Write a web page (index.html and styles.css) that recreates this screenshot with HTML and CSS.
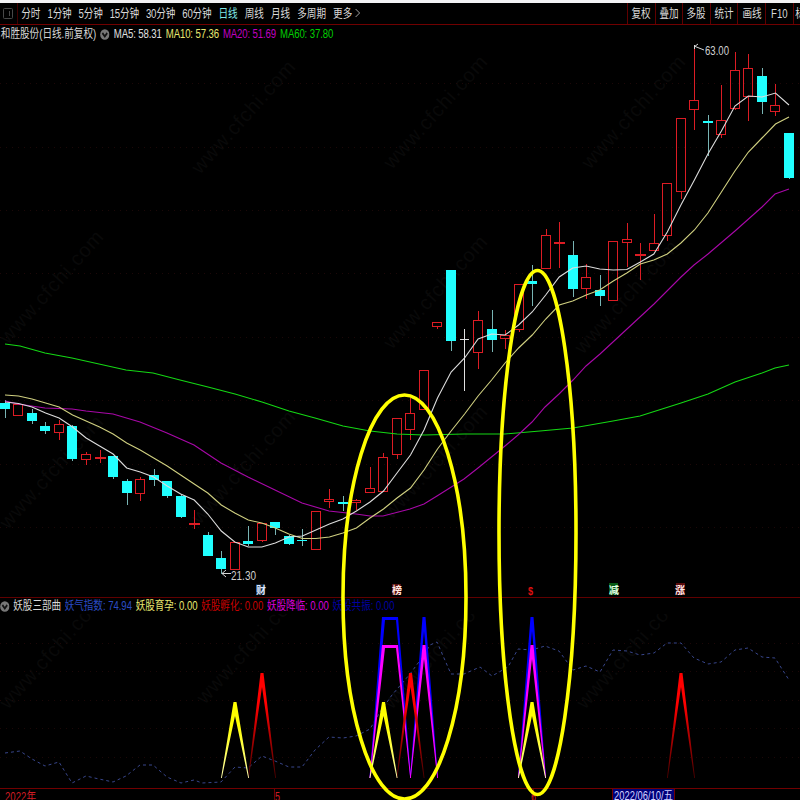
FILE: index.html
```
<!DOCTYPE html>
<html lang="zh-CN">
<head>
    <meta charset="UTF-8">
    <meta name="viewport" content="width=device-width, initial-scale=1.0">
    <title>和胜股份 日线</title>
    <link rel="stylesheet" href="styles.css">
</head>
<body>
    <div class="terminal">
        <div class="toolbar">
            <div class="panel-toggle">
                <svg width="10" height="12" viewBox="0 0 10 12"><rect x="0.5" y="0.5" width="9" height="10" rx="1"/><path d="M6.5 3v5"/></svg>
            </div>
            <div class="periods">
                <span>分时</span><span class="minutes">1分钟</span><span class="minutes">5分钟</span><span class="minutes">15分钟</span><span class="minutes">30分钟</span><span class="minutes">60分钟</span><span class="active">日线</span><span>周线</span><span>月线</span><span>多周期</span><span>更多<svg class="arrow" width="7" height="10" viewBox="0 0 7 10"><path d="M1 1l5 4-5 4"/></svg></span>
            </div>
            <div class="tools">
                <div><span>复权</span></div>
                <div><span>叠加</span></div>
                <div><span>多股</span></div>
                <div><span>统计</span></div>
                <div><span>画线</span></div>
                <div><span>F10</span></div>
                <div class="cut"><span>标</span></div>
            </div>
        </div>

        <div class="legend main-legend">
            <div class="squeeze">
                <span class="stock">和胜股份(日线.前复权)</span>
                <svg class="round" width="12" height="11" viewBox="0 0 12 11"><ellipse cx="6" cy="5.5" rx="5.8" ry="5.3"/><path d="M3 4l3 3.5L9 4"/></svg>
                <span class="white">MA5: 58.31</span>
                <span class="yellow">MA10: 57.36</span>
                <span class="magenta">MA20: 51.69</span>
                <span class="green">MA60: 37.80</span>
            </div>
        </div>

        <svg class="main-chart" id="mainChart" viewBox="0 43 800 554">
            <g id="mainMarks"></g>
            <g id="mainGrid" class="grid"></g>
            <g id="candles"></g>
            <g id="averages"></g>
            <!-- high / low markers -->
            <path class="pointer" d="M694 47l4-3M694.5 45v4M694 46l10 4"/>
            <text class="price" x="705" y="55" textLength="24" lengthAdjust="spacingAndGlyphs">63.00</text>
            <path class="pointer" d="M222 573.5h9M226 570l-4 3.5 4 3.5"/>
            <text class="price" x="231" y="580" textLength="25" lengthAdjust="spacingAndGlyphs">21.30</text>
            <!-- event tags -->
            <g class="tags">
                <rect x="256" y="584" width="9" height="11" fill="#123"/>
                <text x="256" y="594" fill="#dde6ff">财</text>
                <rect x="392" y="584" width="9" height="11" fill="#5a1010"/>
                <text x="392" y="594" fill="#ffe8e0">榜</text>
                <text x="528" y="595" class="dollar" fill="#e01010" textLength="5" lengthAdjust="spacingAndGlyphs">$</text>
                <rect x="609" y="583" width="9" height="12" fill="#075a14"/>
                <text x="609" y="594" fill="#e4ffe4">减</text>
                <rect x="676" y="583" width="9" height="12" fill="#5a0c0c"/>
                <text x="675" y="594" fill="#ffe8e8">涨</text>
            </g>
        </svg>

        <div class="legend sub-legend">
            <div class="squeeze">
                <svg class="round" width="12" height="11" viewBox="0 0 12 11"><ellipse cx="6" cy="5.5" rx="5.8" ry="5.3"/><path d="M3 4l3 3.5L9 4"/></svg>
                <span class="name">妖股三部曲</span>
                <span class="index">妖气指数: 74.94</span>
                <span class="yellow">妖股育孕: 0.00</span>
                <span class="red">妖股孵化: 0.00</span>
                <span class="magenta-bright">妖股降临: 0.00</span>
                <span class="blue">妖股共振: 0.00</span>
            </div>
        </div>

        <svg class="sub-chart" id="subChart" viewBox="0 614 800 174">
            <defs>
                <linearGradient id="fadeRed" gradientUnits="userSpaceOnUse" x1="0" y1="673" x2="0" y2="775">
                    <stop offset="0.3" stop-color="#ff0000"/>
                    <stop offset="1" stop-color="#500000"/>
                </linearGradient>
                <linearGradient id="fadeYellow" gradientUnits="userSpaceOnUse" x1="0" y1="702" x2="0" y2="778">
                    <stop offset="0.3" stop-color="#ffff00"/>
                    <stop offset="1" stop-color="#ffffb0"/>
                </linearGradient>
            </defs>
            <g id="subMarks"></g>
            <g id="subGrid" class="grid"></g>
            <g id="signals"></g>
        </svg>

        <svg class="axis" viewBox="0 788 800 12">
            <path class="axis-line" d="M0 788.5h800M274.5 788v12M533.5 788v12M612.5 788v12M674.5 788v12"/>
            <text class="axis-text" x="5" y="801" textLength="31" lengthAdjust="spacingAndGlyphs">2022年</text>
            <text class="axis-text" x="275" y="801" textLength="5" lengthAdjust="spacingAndGlyphs">5</text>
            <text class="axis-text" x="531" y="801" textLength="5" lengthAdjust="spacingAndGlyphs">6</text>
            <rect x="613" y="789" width="61" height="11" fill="#000078"/>
            <text class="axis-date" x="614" y="800" textLength="59" lengthAdjust="spacingAndGlyphs">2022/06/10/五</text>
        </svg>

        <svg class="highlights" viewBox="0 0 800 800">
            <ellipse cx="404.5" cy="597" rx="61.5" ry="202"/>
            <ellipse cx="537.5" cy="532.5" rx="38.5" ry="262"/>
        </svg>
    </div>
    <script src="chart.js"></script>
</body>
</html>
```
FILE: styles.css
```
* {
    margin: 0;
    padding: 0;
    box-sizing: border-box;
}

body {
    background: #000;
    width: 800px;
    height: 800px;
    overflow: hidden;
    font-family: "Liberation Sans", "Noto Sans CJK SC", sans-serif;
    font-size: 12px;
    color: #d8d8d8;
}

.terminal {
    position: relative;
    width: 800px;
    height: 800px;
    overflow: hidden;
    display: flex;
    flex-direction: column;
    border-top: 3px solid #f2f2f4;
}

svg {
    display: block;
    flex: none;
}

/* Toolbar */
.toolbar {
    height: 22px;
    flex: none;
    display: flex;
    border-bottom: 1px solid #700000;
    overflow: hidden;
}

.panel-toggle {
    width: 18px;
    padding: 5px 0 0 3px;
    border-right: 1px solid #400000;
}

.panel-toggle svg {
    fill: none;
    stroke: #484848;
}

.periods {
    flex: none;
    display: flex;
    gap: 8.8px;
    width: 500px;
    padding-left: 4px;
    line-height: 23px;
    white-space: nowrap;
    transform: scaleX(0.8);
    transform-origin: left;
}

.periods .minutes {
    letter-spacing: -0.2px;
}

.periods .active {
    color: #7fe8e8;
}

.arrow {
    display: inline-block;
    margin-left: 3px;
    fill: none;
    stroke: #b0b0b0;
}

.tools {
    display: flex;
    margin-left: auto;
    width: 173px;
    flex: none;
    overflow: hidden;
}

.tools div {
    width: 27.6px;
    flex: none;
    border-left: 1px solid #600000;
    text-align: center;
    line-height: 23px;
}

.tools span {
    display: inline-block;
    transform: scaleX(0.8);
}

.tools .cut {
    text-align: left;
}

/* Legends */
.legend {
    flex: none;
    overflow: hidden;
}

.main-legend {
    height: 18px;
}

.sub-legend {
    height: 17px;
    border-top: 1px solid #600000;
}

.squeeze {
    display: flex;
    align-items: center;
    gap: 5px;
    width: 1000px;
    height: 100%;
    line-height: 16px;
    white-space: nowrap;
    transform: scaleX(0.8);
    transform-origin: left;
}

.main-legend .squeeze {
    padding-left: 1px;
    letter-spacing: -0.15px;
}

.main-legend .stock {
    letter-spacing: 0;
}

.sub-legend .squeeze {
    gap: 4.6px;
    letter-spacing: -0.06px;
}

.round {
    fill: #777;
}

.round path {
    fill: none;
    stroke: #111;
    stroke-width: 2;
}

.white { color: #e0e0e0; }
.yellow { color: #e8e870; }
.magenta { color: #c000c0; }
.green { color: #00d000; }
.index { color: #2a4cc4; }
.red { color: #c80000; }
.magenta-bright { color: #d800d8; }
.blue { color: #0000a0; }

/* Charts */
.main-chart {
    width: 800px;
    height: 554px;
}

.sub-chart {
    width: 800px;
    height: 174px;
}

.axis {
    width: 800px;
    height: 12px;
}

.grid path {
    stroke: #1c0808;
    stroke-dasharray: 1 5;
}

.watermark {
    fill: #090909;
    font-size: 20px;
    letter-spacing: 1px;
}

.up {
    fill: none;
    stroke: #dc1c24;
}

.up-fill {
    fill: #dc1c24;
}

.down {
    fill: #20ffff;
}

.wick-down {
    stroke: #78b4b4;
}

.flat {
    stroke: #e0e0e0;
}

.ma {
    fill: none;
    stroke-width: 1.1;
}

.pointer {
    fill: none;
    stroke: #d8d8d8;
}

.price {
    fill: #d0d0d0;
    font-size: 12px;
}

.tags text {
    font-size: 10px;
    font-weight: bold;
}

.tags .dollar {
    font-size: 11px;
}

.index-line {
    fill: none;
    stroke: #38468c;
    stroke-dasharray: 3 3;
}

.axis-line {
    stroke: #700000;
}

.axis-text {
    fill: #d01c24;
    font-size: 12px;
}

.axis-date {
    fill: #d0d0ff;
    font-size: 12px;
}

.highlights {
    position: absolute;
    left: 0;
    top: -3px;
    width: 800px;
    height: 800px;
    fill: none;
    stroke: #ffff00;
    stroke-width: 3.6;
}
```
FILE: chart.js
```
const NS = 'http://www.w3.org/2000/svg';
const STEP = 13.517;

function add(parent, tag, attrs, text) {
    const el = document.createElementNS(NS, tag);
    for (const key in attrs) el.setAttribute(key, attrs[key]);
    if (text) el.textContent = text;
    document.getElementById(parent).appendChild(el);
}

// [type, high, body top, body bottom, low], u = up, d = down, f = flat
const candles = [
    ['d', 400, 403, 409, 418], ['u', 404, 404, 415, 415], ['d', 409, 413, 421, 424],
    ['d', 422, 426, 431, 434], ['u', 420, 424, 432, 440], ['d', 425, 426, 459, 461],
    ['u', 452, 454, 459, 465], ['u', 450, 457, 458, 463], ['d', 456, 456, 477, 479],
    ['d', 479, 481, 493, 505], ['u', 477, 479, 493, 501], ['d', 469, 475, 480, 486],
    ['d', 481, 481, 496, 498], ['d', 494, 496, 517, 518], ['u', 510, 523, 524, 529],
    ['d', 532, 535, 556, 556], ['d', 551, 558, 569, 574], ['u', 542, 542, 569, 569],
    ['d', 526, 541, 544, 546], ['u', 523, 523, 540, 542], ['d', 522, 522, 528, 535],
    ['d', 535, 536, 544, 545], ['d', 529, 540, 541, 546], ['u', 511, 511, 549, 549],
    ['u', 489, 499, 501, 508], ['d', 496, 502, 504, 511], ['u', 499, 500, 502, 510],
    ['u', 467, 488, 492, 492], ['u', 453, 457, 491, 491], ['u', 418, 418, 454, 459],
    ['u', 398, 413, 429, 440], ['u', 370, 370, 409, 409], ['u', 322, 322, 326, 329],
    ['d', 270, 270, 341, 351], ['f', 329, 339, 340, 391], ['u', 311, 320, 352, 369],
    ['d', 310, 329, 340, 352], ['u', 330, 335, 338, 349], ['u', 284, 284, 329, 332],
    ['d', 265, 281, 284, 306], ['u', 229, 235, 268, 268], ['u', 222, 242, 243, 268],
    ['d', 241, 255, 289, 297], ['u', 264, 277, 288, 299], ['d', 275, 290, 296, 306],
    ['u', 241, 241, 300, 300], ['u', 223, 239, 242, 267], ['u', 243, 254, 255, 280],
    ['u', 214, 243, 250, 250], ['u', 183, 183, 235, 241], ['u', 118, 118, 191, 199],
    ['u', 47, 100, 109, 130], ['d', 115, 121, 123, 156], ['u', 85, 120, 134, 138],
    ['u', 52, 70, 108, 110], ['u', 54, 68, 96, 121], ['d', 68, 76, 102, 114],
    ['u', 84, 105, 111, 116], ['d', 133, 133, 178, 179]
];

candles.forEach(([type, high, top, bottom, low], i) => {
    const x = Math.floor(5.4 + i * STEP);
    const cx = x + 0.5;
    if (type === 'f') {
        add('candles', 'path', { class: 'flat', d: `M${cx} ${high}V${low}M${x - 4} ${top + 0.5}h9` });
    } else if (type === 'd') {
        add('candles', 'path', { class: 'wick-down', d: `M${cx} ${high}V${low}` });
        add('candles', 'rect', { class: 'down', x: x - 5, y: top, width: 10, height: bottom - top });
    } else {
        add('candles', 'path', { class: 'up', d: `M${cx} ${high}V${top}M${cx} ${bottom}V${low}` });
        if (bottom - top < 2) {
            add('candles', 'path', { class: 'up', d: `M${cx} ${high}V${low}` });
            add('candles', 'rect', { class: 'up-fill', x: x - 5, y: top, width: 11, height: 2 });
        } else {
            add('candles', 'rect', { class: 'up', x: x - 4.5, y: top + 0.5, width: 9, height: bottom - top });
        }
    }
});

// Moving averages
const ma5 = [402, 403.5, 407, 413, 418, 427, 438, 446, 454, 468, 472, 477, 486, 494, 500, 514, 531, 542, 547, 547,
    543, 537, 536, 530, 524, 519, 511, 502, 491, 473, 455, 430, 398, 372, 358, 339, 334, 335, 325, 312,
    295, 277, 268, 266, 269, 270, 269.5, 262, 254, 232, 205, 180, 154, 131, 106, 96, 97, 93, 105];
const ma10 = [395, 396, 399, 403, 407, 415, 421, 427, 434, 443, 450, 458, 466, 475, 484, 493, 505, 513, 520, 523,
    528, 534, 538.5, 538.5, 537, 533, 528, 518, 509, 498, 488, 470, 449, 431, 414, 396, 380, 363, 348, 335,
    319, 305, 301, 295, 290, 281, 273, 264, 260, 254, 243, 230, 213, 192, 171, 152, 138, 124, 117];
const ma20 = '5,401 18,404 45,408 72,409 86,411 113,414 140,422 167,433 194,445 221,463 248,477 275,490 302,503 329,511 356,514 370,516 383,516 410,509 424,504 437,496 464,479 478,468 505,446 518,435 532,422 545,407 559,394 573,380 586,366 600,354 627,329 654,304 681,277 694,265 708,254 735,231 762,207 775,194 789,189';
const ma60 = '5,344 20,346 45,353 72,358 99,364 126,370 153,373 180,380 208,387 235,394 262,402 289,411 315,418 343,426 370,431 397,434 424,435 464,434 505,434 540,431 573,428 613,421 640,416 681,403 708,394 735,382 762,373 775,368 789,365';

const toPoints = values => values.map((y, i) => `${(5 + i * STEP).toFixed(1)},${y}`).join(' ');

add('averages', 'polyline', { class: 'ma', stroke: '#14d814', points: ma60 });
add('averages', 'polyline', { class: 'ma', stroke: '#a808a8', points: ma20 });
add('averages', 'polyline', { class: 'ma', stroke: '#d0d080', points: toPoints(ma10) });
add('averages', 'polyline', { class: 'ma', stroke: '#dcdcdc', points: toPoints(ma5) });

// Grid
[83, 147, 210, 273, 337, 400, 464, 527].forEach(y => add('mainGrid', 'path', { d: `M0 ${y + 0.5}H800` }));
[643, 671, 700, 728, 757].forEach(y => add('subGrid', 'path', { d: `M0 ${y + 0.5}H800` }));

// Background marks
function mark(group, x, y) {
    add(group, 'text', { class: 'watermark', transform: `translate(${x} ${y}) rotate(-48)` }, 'www.cfchi.com');
}
[[8, 530], [8, 345], [200, 175], [200, 525], [392, 350], [392, 520], [392, 170], [583, 355], [590, 170]].forEach(p => mark('mainMarks', p[0], p[1]));
[[8, 710], [205, 705], [392, 710], [585, 710]].forEach(p => mark('subMarks', p[0], p[1]));

// Index line
const index = '5,753 20,751 32,759 45,766 59,762 72,783 86,776 99,779 113,782 126,776 140,765 153,765 167,777 181,783 194,780 202,783 221,782 235,767 248,768 262,756 275,761 289,767 302,767 315,750 329,737 343,738 356,736 370,729 380,712 392,695 410,674 424,655 430,645 437,642 451,674 464,674 480,667 492,676 508,667 518,649 532,650 545,646 559,651 573,670 586,666 600,672 613,650 627,651 640,655 654,653 667,643 681,643 694,658 708,664 721,662 735,650 748,648 762,657 775,658 789,680';
add('signals', 'polyline', { class: 'index-line', points: index });

// Spike whose legs taper towards the base line
function spike(x, y, fill) {
    add('signals', 'path', { fill: fill, d: `M${x - 14} 778L${x - 1.5} ${y}h3L${x + 14} 778h-.8L${x} ${y + 14}L${x - 13.2} 778z` });
}
function plateau(y, fill) {
    add('signals', 'path', { fill: fill, d: `M369.5 778L382 ${y}h16L411 778h-.8L396 ${y + 3}H385L370.3 778z` });
}

plateau(617, '#0000ff');
spike(424, 617, '#0000ff');
spike(532, 617, '#0000ff');
plateau(645, '#ff00ff');
spike(424, 645, '#ff00ff');
spike(532, 645, '#ff00ff');
spike(262, 673, 'url(#fadeRed)');
spike(410.5, 673, 'url(#fadeRed)');
spike(681, 673, 'url(#fadeRed)');
spike(235, 702, 'url(#fadeYellow)');
spike(383.5, 702, 'url(#fadeYellow)');
spike(532, 702, 'url(#fadeYellow)');
```
